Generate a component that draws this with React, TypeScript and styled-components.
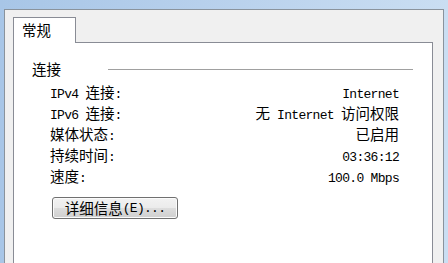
import React from "react";
import styled, { createGlobalStyle } from "styled-components";

const GlobalStyle = createGlobalStyle`
  html, body {
    margin: 0;
    padding: 0;
    width: 448px;
    height: 263px;
    overflow: hidden;
  }
  body {
    background: linear-gradient(90deg, #a8c6e7 0%, #b7d0ec 45%, #cadef2 100%);
    font-family: "Noto Sans CJK SC", "Noto Sans", sans-serif;
    font-size: 14.5px;
    color: #000;
  }
`;

const Frame = styled.div`
  box-sizing: border-box;
  width: 448px;
  height: 263px;
  padding: 9px 4px 0 4px;
  display: flex;
`;

const Dialog = styled.div`
  flex: 1;
  display: flex;
  flex-direction: column;
  background: #f0f0f0;
  border: 1px solid #8a939c;
  border-bottom: none;
  padding: 7px 10px 0 8px;
`;

const TabStrip = styled.div`
  display: flex;
  position: relative;
  z-index: 1;
`;

const Tab = styled.div`
  box-sizing: border-box;
  width: 63px;
  height: 26px;
  margin-bottom: -1px;
  padding-left: 8px;
  display: flex;
  align-items: center;
  background: #fff;
  border: 1px solid #898c95;
  border-bottom: none;
  line-height: 1;
`;

const Panel = styled.div`
  flex: 1;
  background: #fff;
  border: 1px solid #898c95;
  border-bottom: none;
  padding: 15px 19px 0 18px;
  display: flex;
  flex-direction: column;
`;

const GroupHeader = styled.div`
  display: flex;
  align-items: center;
  height: 21px;
  line-height: 21px;
`;

const GroupLine = styled.div`
  flex: 1;
  height: 1px;
  margin: 2px 0 0 47px;
  background: #a0a0a0;
`;

const Rows = styled.div`
  display: grid;
  grid-template-columns: auto auto;
  grid-auto-rows: 21px;
  justify-content: space-between;
  padding: 2px 14px 0 18px;
  line-height: 21px;
`;

const Label = styled.div`
  white-space: nowrap;
  height: 21px;
`;

const Value = styled.div`
  text-align: right;
  white-space: nowrap;
  height: 21px;
`;

const Mono = styled.span`
  font-family: "Liberation Mono", monospace;
  font-size: 13px;
  letter-spacing: -0.7px;
  line-height: 1;
  white-space: pre;
`;

const Button = styled.button`
  box-sizing: border-box;
  width: 126px;
  height: 22px;
  margin: 11px 0 0 20px;
  padding: 0;
  display: flex;
  align-items: center;
  justify-content: center;
  border: 1px solid #707070;
  border-radius: 3px;
  background: linear-gradient(#f2f2f2 0%, #ebebeb 50%, #dddddd 50%, #cfcfcf 100%);
  box-shadow: inset 0 0 0 1px #fbfbfb;
  font-family: "Noto Sans CJK SC", sans-serif;
  font-size: 14.5px;
  color: #000;
  line-height: 1;
`;

type Row = { label: React.ReactNode; value: React.ReactNode };

const rows: Row[] = [
  {
    label: (
      <>
        <Mono>IPv4 </Mono>连接<Mono>:</Mono>
      </>
    ),
    value: <Mono>Internet</Mono>,
  },
  {
    label: (
      <>
        <Mono>IPv6 </Mono>连接<Mono>:</Mono>
      </>
    ),
    value: (
      <>
        无<Mono> Internet </Mono>访问权限
      </>
    ),
  },
  {
    label: (
      <>
        媒体状态<Mono>:</Mono>
      </>
    ),
    value: "已启用",
  },
  {
    label: (
      <>
        持续时间<Mono>:</Mono>
      </>
    ),
    value: <Mono>03:36:12</Mono>,
  },
  {
    label: (
      <>
        速度<Mono>:</Mono>
      </>
    ),
    value: <Mono>100.0 Mbps</Mono>,
  },
];

export default function App() {
  return (
    <>
      <GlobalStyle />
      <Frame>
        <Dialog>
          <TabStrip>
            <Tab>常规</Tab>
          </TabStrip>
          <Panel>
            <GroupHeader>
              连接
              <GroupLine />
            </GroupHeader>
            <Rows>
              {rows.map((r, i) => (
                <React.Fragment key={i}>
                  <Label>{r.label}</Label>
                  <Value>{r.value}</Value>
                </React.Fragment>
              ))}
            </Rows>
            <div>
              <Button>
                详细信息<Mono>(E)...</Mono>
              </Button>
            </div>
          </Panel>
        </Dialog>
      </Frame>
    </>
  );
}
